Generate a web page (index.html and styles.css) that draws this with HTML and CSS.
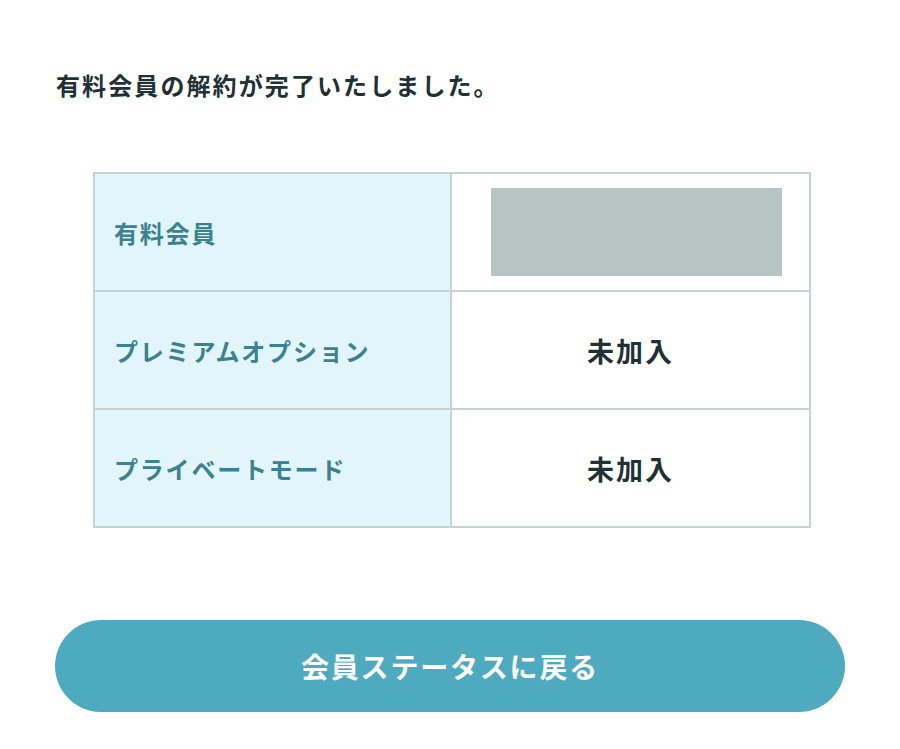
FILE: index.html
```html
<!DOCTYPE html>
<html lang="ja">
<head>
<meta charset="utf-8">
<link rel="stylesheet" href="styles.css">
</head>
<body>
<main class="page">
  <p class="message">有料会員の解約が完了いたしました。</p>
  <table class="status">
    <tr>
      <th>有料会員</th>
      <td><div class="masked"></div></td>
    </tr>
    <tr>
      <th>プレミアムオプション</th>
      <td>未加入</td>
    </tr>
    <tr>
      <th>プライベートモード</th>
      <td>未加入</td>
    </tr>
  </table>
  <a class="back" href="#">会員ステータスに戻る</a>
</main>
</body>
</html>
```
FILE: styles.css
```css
html, body {
  margin: 0;
  padding: 0;
  background: #ffffff;
}
body {
  font-family: "Noto Sans CJK JP", "Noto Sans", sans-serif;
  color: #1f3134;
}
.page {
  padding: 0 55px;
  display: flex;
  flex-direction: column;
}
.message {
  margin: 69px 0 0 1px;
  font-size: 24px;
  line-height: 32px;
  font-weight: 700;
  letter-spacing: 2.1px;
  color: #1f3134;
}
.status {
  margin: 71px 0 0 38px;
  width: 718px;
  border-collapse: collapse;
  border: 2px solid #c6d3d5;
}
.status th,
.status td {
  border: 2px solid #c6d3d5;
  height: 116px;
  padding: 0;
}
.status th {
  width: 336px;
  background: #e2f5fb;
  text-align: left;
  padding-left: 19px;
  font-size: 24px;
  font-weight: 700;
  letter-spacing: 1.8px;
  color: #3b818f;
}
.status td {
  background: #ffffff;
  text-align: center;
  font-size: 27px;
  font-weight: 700;
  letter-spacing: 2px;
  color: #1f3134;
}
.masked {
  width: 291px;
  height: 88px;
  margin: 0 auto 0 39px;
  background: #b7c4c4;
}
.back {
  margin-top: 92px;
  height: 92px;
  border-radius: 46px;
  background: #4eabbf;
  color: #ffffff;
  text-decoration: none;
  display: flex;
  align-items: center;
  justify-content: center;
  font-size: 28px;
  font-weight: 700;
  letter-spacing: 1.8px;
}
```
